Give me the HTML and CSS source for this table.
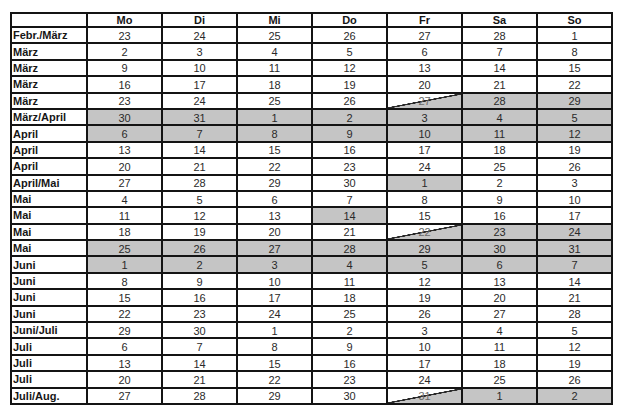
FILE: index.html
```html
<!DOCTYPE html>
<html lang="de">
<head>
<meta charset="utf-8">
<title>Kalender</title>
<link rel="stylesheet" href="styles.css">
</head>
<body>
<table class="cal">
  <colgroup>
    <col class="c-label"><col class="c-day"><col class="c-day"><col class="c-day"><col class="c-day"><col class="c-day"><col class="c-day"><col class="c-day">
  </colgroup>
  <thead>
    <tr><th></th><th>Mo</th><th>Di</th><th>Mi</th><th>Do</th><th>Fr</th><th>Sa</th><th>So</th></tr>
  </thead>
  <tbody>
    <tr><th>Febr./März</th><td>23</td><td>24</td><td>25</td><td>26</td><td>27</td><td>28</td><td>1</td></tr>
    <tr><th>März</th><td>2</td><td>3</td><td>4</td><td>5</td><td>6</td><td>7</td><td>8</td></tr>
    <tr><th>März</th><td>9</td><td>10</td><td>11</td><td>12</td><td>13</td><td>14</td><td>15</td></tr>
    <tr><th>März</th><td>16</td><td>17</td><td>18</td><td>19</td><td>20</td><td>21</td><td>22</td></tr>
    <tr><th>März</th><td>23</td><td>24</td><td>25</td><td>26</td><td class="half">27</td><td class="off">28</td><td class="off">29</td></tr>
    <tr class="off"><th>März/April</th><td>30</td><td>31</td><td>1</td><td>2</td><td>3</td><td>4</td><td>5</td></tr>
    <tr class="off"><th>April</th><td>6</td><td>7</td><td>8</td><td>9</td><td>10</td><td>11</td><td>12</td></tr>
    <tr><th>April</th><td>13</td><td>14</td><td>15</td><td>16</td><td>17</td><td>18</td><td>19</td></tr>
    <tr><th>April</th><td>20</td><td>21</td><td>22</td><td>23</td><td>24</td><td>25</td><td>26</td></tr>
    <tr><th>April/Mai</th><td>27</td><td>28</td><td>29</td><td>30</td><td class="off">1</td><td>2</td><td>3</td></tr>
    <tr><th>Mai</th><td>4</td><td>5</td><td>6</td><td>7</td><td>8</td><td>9</td><td>10</td></tr>
    <tr><th>Mai</th><td>11</td><td>12</td><td>13</td><td class="off">14</td><td>15</td><td>16</td><td>17</td></tr>
    <tr><th>Mai</th><td>18</td><td>19</td><td>20</td><td>21</td><td class="half">22</td><td class="off">23</td><td class="off">24</td></tr>
    <tr class="off"><th>Mai</th><td>25</td><td>26</td><td>27</td><td>28</td><td>29</td><td>30</td><td>31</td></tr>
    <tr class="off"><th>Juni</th><td>1</td><td>2</td><td>3</td><td>4</td><td>5</td><td>6</td><td>7</td></tr>
    <tr><th>Juni</th><td>8</td><td>9</td><td>10</td><td>11</td><td>12</td><td>13</td><td>14</td></tr>
    <tr><th>Juni</th><td>15</td><td>16</td><td>17</td><td>18</td><td>19</td><td>20</td><td>21</td></tr>
    <tr><th>Juni</th><td>22</td><td>23</td><td>24</td><td>25</td><td>26</td><td>27</td><td>28</td></tr>
    <tr><th>Juni/Juli</th><td>29</td><td>30</td><td>1</td><td>2</td><td>3</td><td>4</td><td>5</td></tr>
    <tr><th>Juli</th><td>6</td><td>7</td><td>8</td><td>9</td><td>10</td><td>11</td><td>12</td></tr>
    <tr><th>Juli</th><td>13</td><td>14</td><td>15</td><td>16</td><td>17</td><td>18</td><td>19</td></tr>
    <tr><th>Juli</th><td>20</td><td>21</td><td>22</td><td>23</td><td>24</td><td>25</td><td>26</td></tr>
    <tr><th>Juli/Aug.</th><td>27</td><td>28</td><td>29</td><td>30</td><td class="half">31</td><td class="off">1</td><td class="off">2</td></tr>
  </tbody>
</table>
</body>
</html>
```

FILE: styles.css
```css
html, body {
  margin: 0;
  padding: 0;
  background: #ffffff;
}

body {
  font-family: "Liberation Sans", Arial, sans-serif;
  font-size: 11px;
  color: #2a2a2a;
}

.cal {
  margin: 12px 0 0 10px;
  width: 603px;
  height: 393px;
  table-layout: fixed;
  border-collapse: separate;
  border-spacing: 2px;
  background: #141414;
}

.c-label {
  width: 74px;
}

.c-day {
  width: 73px;
}

.cal th,
.cal td {
  padding: 0;
  background: #ffffff;
  line-height: 12px;
  text-align: center;
  vertical-align: middle;
  white-space: nowrap;
  overflow: hidden;
}

.cal th {
  font-weight: bold;
  color: #161616;
}

.cal tbody th {
  text-align: left;
  padding-left: 1px;
}

.cal td {
  font-weight: normal;
  padding-top: 1px;
}

.cal tr.off td,
.cal td.off {
  background: #c5c5c5;
}

.cal td.half {
  color: #6a6a6a;
  background: linear-gradient(to bottom right,
    #ffffff calc(50% - 0.9px),
    #2a2a2a calc(50% - 0.6px),
    #2a2a2a calc(50% + 0.6px),
    #c5c5c5 calc(50% + 0.9px));
}
```
